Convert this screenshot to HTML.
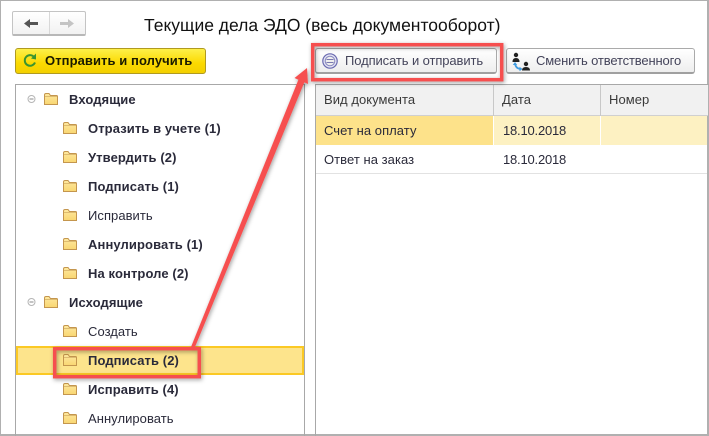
<!DOCTYPE html>
<html><head><meta charset="utf-8">
<style>
html,body{margin:0;padding:0;background:#fff}
#p{position:relative;width:709px;height:436px;overflow:hidden;background:#fff;font-family:"Liberation Sans",sans-serif;font-size:13px;color:#2a2a3a}
#p div,#p span{position:absolute;white-space:nowrap;box-sizing:border-box}
.t{line-height:16px;letter-spacing:.05px}
.b{font-weight:bold;letter-spacing:.1px}
svg{position:absolute;overflow:visible}
</style></head><body><div id="p">
<div style="left:0;top:0;width:709px;height:436px;border:1px solid #b0b0b0;border-width:1px 2px 2px 1px"></div>

<div style="left:12px;top:11px;width:74px;height:25px;border:1px solid #c4c4c4;border-bottom:2px solid #b8b8b8;border-radius:2px;background:linear-gradient(#fff,#f2f2f2)"></div>
<div style="left:49px;top:12px;width:1px;height:22px;background:#d8d8d8"></div>
<svg style="left:0;top:0" width="709" height="436">
<path d="M24 23.500 L30 19 V22 H38 V25 H30 V28Z" fill="#555"/>
<path d="M74 23.500 L68 19 V22 H60 V25 H68 V28Z" fill="#c4c4c4"/>
</svg>
<div style="left:144px;top:14px;font-size:17.500px;line-height:22px;color:#111;letter-spacing:0;text-rendering:geometricPrecision">Текущие дела ЭДО (весь документооборот)</div>

<div style="left:15px;top:48px;width:191px;height:26px;border:1px solid #b09a20;border-radius:3px;background:linear-gradient(#fdf04a,#fbd900 60%,#f3d000)"></div>
<svg style="left:0;top:0" width="40" height="80"><path d="M34.500 57.500 A5.300 5.300 0 1 0 35 62.500" fill="none" stroke="#3a9430" stroke-width="2"/><path d="M31 58.500 L36 59.500 V53.500Z" fill="#3a9430"/></svg>
<div class="t b" style="left:45px;top:53px;color:#1a1a00;letter-spacing:.08px">Отправить и получить</div>

<div style="left:15px;top:84px;width:290px;height:360px;border:1px solid #a8a8a8"></div>
<div style="left:315px;top:84px;width:400px;height:360px;border:1px solid #a8a8a8"></div>

<!-- tree -->
<div style="left:16px;top:346px;width:288px;height:29px;background:#fde48c;border:2px solid #fbc924"></div>
<svg style="left:0;top:0" width="320" height="436">
<defs><linearGradient id="g" x1="0" y1="0" x2="0" y2="1"><stop offset="0" stop-color="#fee9a0"/><stop offset="1" stop-color="#f9d672"/></linearGradient>
<g id="f"><path d="M.5 2 Q.5 .5 2 .5 H5 L6.500 2.500 H12.500 Q13.500 2.500 13.500 3.500 V11.500 H.5Z" fill="url(#g)" stroke="#c4964e"/><path d="M1 3.500H13" stroke="#c9a05a" stroke-width=".6"/></g>
<g id="m"><circle cx="4" cy="4" r="3.500" fill="#fff" stroke="#b5b5b5"/><path d="M2 4H6" stroke="#888"/></g></defs>
<use href="#m" x="27.500" y="95"/><use href="#f" x="44" y="93"/>
<use href="#f" x="63" y="122"/><use href="#f" x="63" y="151"/><use href="#f" x="63" y="180"/><use href="#f" x="63" y="209"/><use href="#f" x="63" y="238"/><use href="#f" x="63" y="267"/>
<use href="#m" x="27.500" y="298"/><use href="#f" x="44" y="296"/>
<use href="#f" x="63" y="325"/><use href="#f" x="63" y="354"/><use href="#f" x="63" y="383"/><use href="#f" x="63" y="412"/>
</svg>
<div class="t b" style="left:69px;top:92px">Входящие</div>
<div class="t b" style="left:88px;top:121px">Отразить в учете (1)</div>
<div class="t b" style="left:88px;top:150px">Утвердить (2)</div>
<div class="t b" style="left:88px;top:179px">Подписать (1)</div>
<div class="t" style="left:88px;top:208px">Исправить</div>
<div class="t b" style="left:88px;top:237px">Аннулировать (1)</div>
<div class="t b" style="left:88px;top:266px">На контроле (2)</div>
<div class="t b" style="left:69px;top:295px">Исходящие</div>
<div class="t" style="left:88px;top:324px">Создать</div>
<div class="t b" style="left:88px;top:353px">Подписать (2)</div>
<div class="t b" style="left:88px;top:382px">Исправить (4)</div>
<div class="t" style="left:88px;top:411px">Аннулировать</div>

<!-- table -->
<div style="left:316px;top:85px;width:392px;height:31px;background:#f1f1f1;border-bottom:1px solid #d0d0d0"></div>
<div style="left:493px;top:85px;width:1px;height:31px;background:#c8c8c8"></div>
<div style="left:600px;top:85px;width:1px;height:31px;background:#c8c8c8"></div>
<div style="left:316px;top:116px;width:177px;height:29px;background:#fde28a"></div>
<div style="left:494px;top:116px;width:106px;height:29px;background:#fdf1c2"></div>
<div style="left:601px;top:116px;width:106px;height:29px;background:#fdf1c2"></div>
<div style="left:316px;top:173px;width:391px;height:1px;background:#e2e2e2"></div>
<div class="t" style="left:324px;top:92px;color:#3a3a3a">Вид документа</div>
<div class="t" style="left:502px;top:92px;color:#3a3a3a">Дата</div>
<div class="t" style="left:609px;top:92px;color:#3a3a3a">Номер</div>
<div class="t" style="left:324px;top:123px">Счет на оплату</div>
<div class="t" style="left:503px;top:123px;letter-spacing:-.2px">18.10.2018</div>
<div class="t" style="left:324px;top:152px">Ответ на заказ</div>
<div class="t" style="left:503px;top:152px;letter-spacing:-.2px">18.10.2018</div>

<!-- buttons -->
<div style="left:315px;top:48px;width:182px;height:26px;border:1px solid #aaa;border-bottom:2px solid #a0a0a0;border-radius:3px;background:linear-gradient(#fff,#eee)"></div>
<div class="t" style="left:345px;top:53px;color:#44445a;letter-spacing:-.1px">Подписать и отправить</div>
<div style="left:506px;top:48px;width:189px;height:26px;border:1px solid #aaa;border-bottom:2px solid #a0a0a0;border-radius:3px;background:linear-gradient(#fff,#eee)"></div>
<div class="t" style="left:536px;top:53px;color:#44445a;letter-spacing:-.15px">Сменить ответственного</div>
<svg style="left:0;top:0" width="709" height="100">
<circle cx="330" cy="61" r="7.200" fill="#e4e4f4" stroke="#6a6ab0" stroke-width="1.200"/>
<circle cx="330" cy="61" r="4.800" fill="#eee" stroke="#8a8ac0"/>
<path d="M326.500 59.500H333.500M326.500 62.500H333.500" stroke="#7a7ab0"/>
<circle cx="516" cy="55" r="2.200" fill="#222"/><path d="M512.500 62 Q512.500 58 516 58 Q519.500 58 519.500 62Z" fill="#222"/>
<circle cx="526" cy="64" r="2.200" fill="#222"/><path d="M522 70.500 Q522 67 526 67 Q530 67 530 70.500Z" fill="#222"/>
<path d="M515 63.500 Q515.500 68 520 69" fill="none" stroke="#3f9be0" stroke-width="1.800"/><path d="M512.800 65 L515 62 L517.200 65Z M519.500 66.800 L522.500 69 L519.500 71.200Z" fill="#3f9be0"/>
</svg>

<!-- annotations -->
<svg style="left:0;top:0" width="709" height="436">
<defs><filter id="s" x="-15%" y="-15%" width="130%" height="130%"><feDropShadow dx="1" dy="1.500" stdDeviation="2" flood-color="#000" flood-opacity=".38"/></filter></defs>
<g filter="url(#s)" fill="none" stroke="#f6504f">
<rect x="312.700" y="44.700" width="189" height="35" stroke-width="3.500"/>
<rect x="54.700" y="348.700" width="144.600" height="28" stroke-width="3.500"/>
<path d="M191 347 L195 347 L304.500 82 L298.500 79.500Z" fill="#f6504f" stroke="none"/>
<path d="M307 68 L308 84 L294.500 78Z" fill="#f6504f" stroke="none"/>
</g>
</svg>
</div></body></html>
